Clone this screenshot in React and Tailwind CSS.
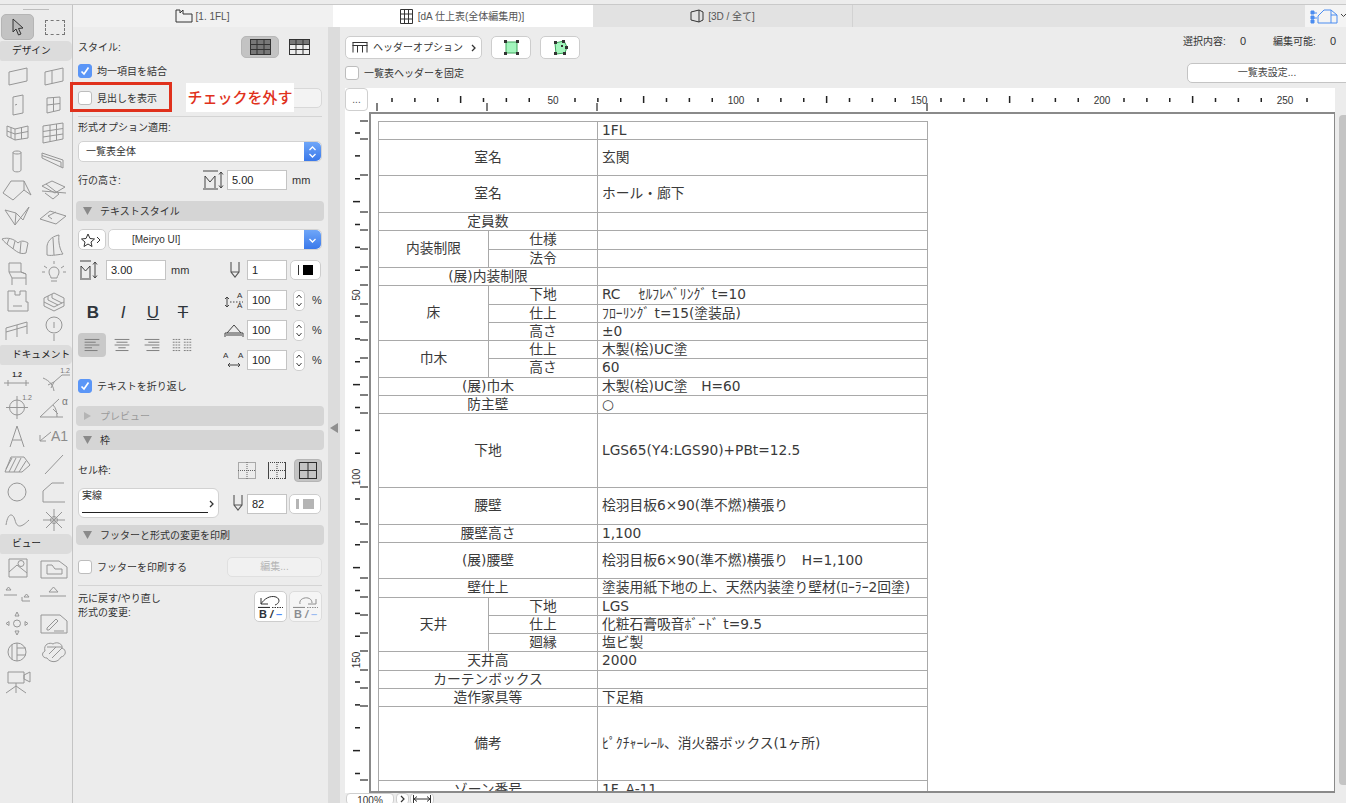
import React from "react";

// ===== TABLE DATA (h = row height, sub rows use span on the first one) =====
const rows = [
  { h: 18, label: "", value: "1FL" },
  { h: 36, label: "室名", value: "玄関" },
  { h: 37, label: "室名", value: "ホール・廊下" },
  { h: 18, label: "定員数", value: "" },
  { h: 19, group: "内装制限", span: 2, sub: "仕様", value: "" },
  { h: 18, sub: "法令", value: "" },
  { h: 18, label: "(展)内装制限", value: "" },
  { h: 19, group: "床", span: 3, sub: "下地", value: "RC　 ｾﾙﾌﾚﾍﾞﾘﾝｸﾞ t=10" },
  { h: 18, sub: "仕上", value: "ﾌﾛｰﾘﾝｸﾞ t=15(塗装品)" },
  { h: 18, sub: "高さ", value: "±0" },
  { h: 18, group: "巾木", span: 2, sub: "仕上", value: "木製(桧)UC塗" },
  { h: 19, sub: "高さ", value: "60" },
  { h: 18, label: "(展)巾木", value: "木製(桧)UC塗　H=60" },
  { h: 18, label: "防主壁", value: "○" },
  { h: 74, label: "下地", value: "LGS65(Y4:LGS90)+PBt=12.5" },
  { h: 37, label: "腰壁", value: "桧羽目板6×90(準不燃)横張り" },
  { h: 18, label: "腰壁高さ", value: "1,100" },
  { h: 36, label: "(展)腰壁", value: "桧羽目板6×90(準不燃)横張り　H=1,100" },
  { h: 19, label: "壁仕上", value: "塗装用紙下地の上、天然内装塗り壁材(ﾛｰﾗｰ2回塗)" },
  { h: 18, group: "天井", span: 3, sub: "下地", value: "LGS" },
  { h: 18, sub: "仕上", value: "化粧石膏吸音ﾎﾞｰﾄﾞ t=9.5" },
  { h: 18, sub: "廻縁", value: "塩ビ製" },
  { h: 19, label: "天井高", value: "2000" },
  { h: 18, label: "カーテンボックス", value: "" },
  { h: 18, label: "造作家具等", value: "下足箱" },
  { h: 74, label: "備考", value: "ﾋﾟｸﾁｬｰﾚｰﾙ、消火器ボックス(1ヶ所)" },
  { h: 18, label: "ゾーン番号", value: "1F_A-11" },
];

// ===== TOOL PALETTE ICONS (36x28 cell) =====
const I = (d, extra) => ({ d, extra });
const designTools = [
  I("M9 10L27 6V19L9 23Z"),
  I("M9 10L27 6V19L9 23ZM16 8.5V21.5"),
  I("M13 7L23 5V23L13 25ZM15 15l2-.7"),
  I("M11 8L24 7V20L11 23ZM17.5 7.5V21.5M11 15L24 13.5"),
  I("M7 8L15 11L28 8V20L15 22L7 18ZM15 11V22M7 13L15 16L28 13.5M11 9.5V20M21.5 9.5V21"),
  I("M7 8L27 5V21L7 25ZM7 13.5L27 10.5M7 19L27 16M14 7V23.5M20.5 6V22"),
  I("M13 6.5C13 4.5 21 4.5 21 6.5V24C21 26.5 13 26.5 13 24ZM13 6.5C13 8.5 21 8.5 21 6.5"),
  I("M6 7L27 14V22L6 12ZM6 9.5L25 16M25 16V21"),
  I("M3 19L11 7L24 7L31 21L24 16L13 26ZM24 7L24 16"),
  I("M6 12L16 7L29 13L19 19ZM6 17L30 19M10 10L23 20L17 25L9 19"),
  I("M5 8L15 23L29 5L23 18L16 11Z M15 23L16 11"),
  I("M4 17L14 9L30 14L20 22ZM12 14L20 10M12 14L16 17"),
  I("M2 9C8 7 14 9 18 13C21 10 25 11 28 13L26 23C20 25 16 21 12 18C8 15 4 12 2 9ZM9 9L7 14M15 11L13 19M21 12L20 23"),
  I("M11 25V16C12 9 18 6 23 5C22 12 24 20 27 24C20 25 14 26 11 25ZM17 8L18 25"),
  I("M9 5H21V14L26 16V20H12L9 14ZM9 14H21M12 20V27M26 20V27M21 14L26 16"),
  I("M13 14A5 5 0 1 1 23 14C23 17 21 18 21 20H15C15 18 13 17 13 14ZM15 23H21M18 3V6M8 8L11 10M28 8L25 10M6 14H9M27 14H30"),
  I("M8 5H15V9H20V5H26V16H28V25H8Z M13 20H22"),
  I("M8 12L18 7L28 12V16L18 21L8 16ZM12 10V14L22 19M16 8V12L26 17M8 16V20L18 25L28 20V16"),
  I("M6 14L27 8M6 18L27 12M6 26V14M17 23V11M27 20V8"),
  I("M18 20V27M18 3A7 7 0 1 0 18 19A7 7 0 1 0 18 3ZM18 8V14"),
];
const docTools = [
  I("M4 18H29M8 15V21M26 15V21", <text x="17" y="12" fontSize="7" fontWeight="700" textAnchor="middle" fill="#333" stroke="none">1.2</text>),
  I("M18 26C17 20 14 16 7 13M18 17L12 20M18 17L15 23M18 17L26 10H34", <text x="29" y="8" fontSize="7" textAnchor="middle" fill="#777" stroke="none">1.2</text>),
  I("M17 7A7.5 7.5 0 1 0 17 22A7.5 7.5 0 1 0 17 7ZM17 3V26M6 14.5H28", <text x="27" y="7" fontSize="7" textAnchor="middle" fill="#777" stroke="none">1.2</text>),
  I("M4 24H27M4 24L23 6M17 12C20 15 21 19 21 24M17 16L22 21", <text x="29" y="12" fontSize="10" textAnchor="middle" fill="#777" stroke="none">α</text>),
  I("M10 26L17 5L24 26M12.5 19H21.5"),
  I("M4 20L15 11M4 20V14M4 20H10", <text x="23.5" y="20" fontSize="14" textAnchor="middle" fill="#8b8b8b" stroke="none">A1</text>),
  I("M5 23L11 8H24L30 16L22 23ZM9 23L16 9M14 23L21 9M19 23L26 12M6 20L12 9"),
  I("M9 25L27 6"),
  I("M17 6A9 9 0 1 0 17 24A9 9 0 1 0 17 6Z"),
  I("M7 25V14L16 6H28M7 25H29"),
  I("M6 20C8 7 13 8 15 15C17 24 22 22 29 15"),
  I("M18 4V26M7 15H29M10 7L26 23M26 7L10 23M18 11.5A3.5 3.5 0 1 0 18 18.5A3.5 3.5 0 1 0 18 11.5Z"),
];
const viewTools = [
  I("M9 5H27V23H9ZM9 18L17 11L27 19M21 6.5A3 3 0 1 0 21 12.5A3 3 0 1 0 21 6.5Z"),
  I("M5 7H23L31 13V24H5ZM11 11H16L19 15H26V20H11Z"),
  I("M4 13H17M22 19H30M6 8H11L8.5 5ZM24 15H29L26.5 12ZM22 15V19"),
  I("M4 14H30M13 10H22L17.5 5Z"),
  I("M17 10A3.5 3.5 0 1 0 17 17A3.5 3.5 0 1 0 17 10ZM17 2L15 6H19ZM17 25L15 21H19ZM6 13.5L9 11.5V15.5ZM28 13.5L25 11.5V15.5Z"),
  I("M5 5H24L31 11V23H5ZM11 18L20 9L22 11L13 20H11ZM18 21H28"),
  I("M17 5A9 9 0 1 0 17 23A9 9 0 1 0 17 5ZM12 6.5V21.5M17 5V23M17 10H26M17 17H26"),
  I("M9 13C7 6 14 4 17 6C21 3 27 6 26 10C31 12 30 18 25 19C22 25 14 25 11 20C6 20 5 15 9 13ZM11 9H26M13 16L20 9M16 20L26 10"),
  I("M8 6H24V17H8ZM24 9L30 6V16L24 13ZM16 17V20M16 20L6 27M16 20V27M16 20L26 27"),
];

const ToolIcon = ({ tool }) => (
  <svg width="36" height="28" viewBox="0 0 36 28" fill="none" stroke="#969696" strokeWidth="1" strokeLinejoin="round">
    <path d={tool.d} />
    {tool.extra}
  </svg>
);

const ToolGrid = ({ tools }) => (
  <div className="grid grid-cols-2 w-[72px]">
    {tools.map((t, i) => (
      <ToolIcon key={i} tool={t} />
    ))}
  </div>
);

const PaletteHead = ({ children }) => (
  <div className="h-[20px] w-[72px] bg-[#dcdcdc] rounded-r-[5px] rounded-l-[2px] pl-[12px] text-[9.7px] leading-[20px] text-[#222] whitespace-nowrap">
    {children}
  </div>
);

// ===== SMALL PANEL PARTS =====
const Check = ({ on, children, className = "" }) => (
  <label className={`flex items-center gap-[5px] text-[10px] text-[#333] whitespace-nowrap ${className}`}>
    <span className={`w-[14px] h-[14px] rounded-[3px] flex items-center justify-center border ${on ? "bg-[#5b96f7] border-[#5b96f7]" : "bg-white border-[#bdbdbd]"}`}>
      {on && (
        <svg width="10" height="10" viewBox="0 0 10 10" fill="none" stroke="#fff" strokeWidth="1.7">
          <path d="M1.5 5.5L4 8L8.5 1.5" />
        </svg>
      )}
    </span>
    {children}
  </label>
);

const Section = ({ dim, children, className = "" }) => (
  <div className={`-ml-[2px] -mr-[2px] h-[20px] rounded-[4px] bg-[#d5d5d5] flex items-center pl-[7px] gap-[8px] text-[10px] ${dim ? "text-[#9a9a9a]" : "text-[#333]"} ${className}`}>
    <svg width="9" height="8" viewBox="0 0 9 8">
      {dim ? <path d="M1 0L8 4L1 8Z" fill="#b4b4b4" /> : <path d="M0 0H9L4.5 8Z" fill="#8a8a8a" />}
    </svg>
    {children}
  </div>
);

const Field = ({ w, children }) => (
  <div className={`h-[20px] ${w} bg-white border border-[#c4c4c4] pl-[4px] text-[11px] leading-[18px] text-[#222]`}>{children}</div>
);

const Stepper = () => (
  <div className="w-[12px] h-[21px] bg-white border border-[#cfcfcf] rounded-[5px] flex flex-col items-center justify-center">
    <svg width="8" height="15" viewBox="0 0 8 15" fill="none" stroke="#444" strokeWidth="1">
      <path d="M1.5 5L4 2L6.5 5M1.5 10L4 13L6.5 10" />
    </svg>
  </div>
);

const WhiteBtn = ({ className = "", children }) => (
  <div className={`bg-white border border-[#cdcdcd] rounded-[5px] flex items-center justify-center ${className}`}>{children}</div>
);

const BlueEnd = ({ double }) => (
  <div className="w-[17px] h-full rounded-r-[5px] bg-gradient-to-b from-[#6fa6f8] to-[#3a78ea] flex items-center justify-center">
    <svg width="9" height="14" viewBox="0 0 9 14" fill="none" stroke="#fff" strokeWidth="1.3">
      {double && <path d="M1.5 5L4.5 2L7.5 5" />}
      <path d={double ? "M1.5 9L4.5 12L7.5 9" : "M1.5 6L4.5 9L7.5 6"} />
    </svg>
  </div>
);

const PenIcon = () => (
  <svg width="12" height="20" viewBox="0 0 12 20" fill="none" stroke="#555" strokeWidth="1.1">
    <path d="M2 2V12L6 17L10 12V2M2 12H10" />
  </svg>
);

const GridIcon = ({ head, size = 21 }) => (
  <svg width={size} height="16" viewBox="0 0 21 16" fill="none" stroke="#333" strokeWidth="1">
    {head && <rect x="0.5" y="0.5" width="20" height="5" fill="#777" />}
    <rect x="0.5" y="0.5" width="20" height="15" fill={head ? "none" : "#777"} />
    <path d="M0 5.5H21M0 10.5H21M7 0V16M14 0V16" />
  </svg>
);

const RowIcon = ({ d, extra }) => (
  <svg width="22" height="20" viewBox="0 0 22 20" fill="none" stroke="#444" strokeWidth="1">
    <path d={d} />
    {extra}
  </svg>
);

const UndoBtn = ({ redo }) => (
  <WhiteBtn className={`w-[33px] h-[31px] ${redo ? "bg-[#f2f2f2] opacity-50" : ""}`}>
    <div className="flex flex-col items-center">
      <svg width="27" height="14" viewBox="0 0 27 14" fill="none" stroke="#333" strokeWidth="1">
        <path d={redo ? "M8 10C6 3 20 1 20 9M16 10H24V5" : "M4 10H11M4 10V4M4 10C7 5 13 1 19 3C24 5 22 10 18 11"} />
        <path d="M1 13.5H13" strokeWidth="1.2" />
        <path d="M15 13.5H26" strokeDasharray="1.5 1" />
      </svg>
      <div className="flex items-center gap-[3px] h-[12px] text-[11px] leading-[12px] font-bold text-[#2b3138]">
        <span>B</span>
        <span className="italic">/</span>
        <span className="text-[#4f8df5]">–</span>
      </div>
    </div>
  </WhiteBtn>
);

// ===== LEFT PANEL =====
const SidePanel = () => (
  <div className="w-[255px] pl-[5px] pr-[6px] flex flex-col relative">
    <div className="mt-[9px] h-[22px] flex items-center text-[10px] text-[#333]">
      スタイル:
      <div className="ml-auto w-[38px] h-[22px] bg-[#c3c3c3] border border-[#b7b7b7] rounded-[5px] flex items-center justify-center mr-[10px]">
        <GridIcon />
      </div>
      <div className="w-[22px] mr-[11px]">
        <GridIcon head />
      </div>
    </div>
    <Check on className="mt-[5px] h-[16px]">均一項目を結合</Check>
    <div className="mt-[9px] h-[20px] flex items-center">
      <Check>見出しを表示</Check>
      <div className="ml-auto w-[60px] h-[20px] bg-[#f3f3f3] border border-[#d8d8d8] rounded-[5px]" />
    </div>
    <div className="mt-[8px] h-px bg-[#d4d4d4]" />
    <div className="mt-[3px] h-[16px] text-[10px] leading-[16px] text-[#333]">形式オプション適用:</div>
    <div className="mt-[5px] h-[21px] bg-white rounded-[5px] border border-[#d2d2d2] flex items-center justify-between pl-[7px] text-[10px] text-[#333]">
      一覧表全体
      <BlueEnd double />
    </div>
    <div className="mt-[8px] h-[20px] flex items-center text-[10px] text-[#333]">
      行の高さ:
      <div className="ml-auto mr-[3px]">
        <RowIcon d="M1 1H16M1 19H16M3 18V6L8 12L13 6V18M19 2V18M17 4.5L19 2L21 4.5M17 15.5L19 18L21 15.5" />
      </div>
      <Field w="w-[60px]">5.00</Field>
      <span className="w-[35px] pl-[5px] text-[11px]">mm</span>
    </div>

    <Section className="mt-[11px]">テキストスタイル</Section>

    <div className="mt-[8px] h-[21px] flex items-center gap-[2px]">
      <WhiteBtn className="w-[28px] h-[21px] gap-[1px]">
        <svg width="22" height="14" viewBox="0 0 22 14" fill="none" stroke="#333" strokeWidth="1">
          <path d="M7 1L9 5.5L13.5 6L10 9L11 13.5L7 11L3 13.5L4 9L.5 6L5 5.5ZM16 4L19 7L16 10" />
        </svg>
      </WhiteBtn>
      <div className="flex-1 h-[21px] bg-white border border-[#d2d2d2] rounded-[5px] flex items-center justify-between pl-[23px] text-[10px] text-[#333]">
        [Meiryo UI]
        <BlueEnd />
      </div>
    </div>

    <div className="mt-[10px] h-[110px] flex">
      <div className="w-[145px]">
        <div className="h-[20px] flex items-center pl-[1px] gap-[5px] text-[11px] text-[#333]">
          <RowIcon d="M1 1H12M1 19H12M2 18V6L6.5 11L11 6V18M16 2V18M14 4.5L16 2L18 4.5M14 15.5L16 18L18 15.5" />
          <Field w="w-[60px]">3.00</Field>
          <span>mm</span>
        </div>
        <div className="mt-[22px] h-[22px] flex items-center text-[#2f353b]">
          <span className="w-[30px] text-center text-[17px] leading-[22px] font-bold">B</span>
          <span className="w-[30px] text-center text-[17px] leading-[22px] italic font-medium">I</span>
          <span className="w-[30px] text-center text-[17px] leading-[22px] underline">U</span>
          <span className="w-[30px] text-center text-[17px] leading-[22px] line-through">T</span>
        </div>
        <div className="mt-[9px] h-[24px] flex items-center">
          {["M6 7H22M6 10H18M6 13H22M6 16H14M6 19H20", "M6 7H22M8 10H20M6 13H22M10 16H18M7 19H21", "M6 7H22M10 10H22M6 13H22M14 16H22M8 19H22", "M4 7H13M4 10H13M4 13H13M4 16H13M4 19H13M16 7H24M16 10H24M16 13H24M16 16H24M16 19H24"].map((d, i) => (
            <div key={i} className={`w-[28px] h-[24px] rounded-[4px] mr-[2px] ${i === 0 ? "bg-[#c9c9c9]" : ""}`}>
              <svg width="28" height="24" viewBox="0 0 28 26" fill="none" stroke="#777" strokeWidth="1">
                <path d={d} strokeDasharray={i === 3 ? "2 1" : undefined} />
              </svg>
            </div>
          ))}
        </div>
      </div>
      <div className="flex-1 flex flex-col gap-[10px]">
        <div className="h-[20px] flex items-center gap-[3px]">
          <div className="w-[21px] flex justify-end pr-[3px]">
            <PenIcon />
          </div>
          <Field w="w-[40px]">1</Field>
          <WhiteBtn className="w-[31px] h-[20px] gap-[4px]">
            <span className="w-px h-[10px] bg-[#333]" />
            <span className="w-[10px] h-[10px] bg-black" />
          </WhiteBtn>
        </div>
        {[
          <>
            <path d="M4 7V17M2 9L4 7L6 9M2 15L4 17L6 15" />
            <text x="14" y="8" fontSize="8" fill="#333" stroke="none">A</text>
            <text x="14" y="18" fontSize="8" fill="#333" stroke="none">A</text>
            <path d="M7 12H20" strokeDasharray="1.5 1.5" />
          </>,
          <path d="M2 13H20M11 5L4 13M11 5L18 13M2 13V17M20 13V17M3 15H19" />,
          <>
            <text x="0" y="8" fontSize="8" fill="#333" stroke="none">A</text>
            <text x="15" y="8" fontSize="8" fill="#333" stroke="none">A</text>
            <path d="M5 15H17M7 13L5 15L7 17M15 13L17 15L15 17" />
          </>,
        ].map((svg, i) => (
          <div key={i} className="h-[20px] flex items-center gap-[2px]">
            <svg width="22" height="20" viewBox="0 0 22 20" fill="none" stroke="#444" strokeWidth="1">
              {svg}
            </svg>
            <Field w="w-[40px]">100</Field>
            <div className="ml-[4px]">
              <Stepper />
            </div>
            <span className="ml-[5px] text-[11px] text-[#333]">%</span>
          </div>
        ))}
      </div>
    </div>

    <Check on className="mt-[8px] h-[16px]">テキストを折り返し</Check>

    <Section dim className="mt-[12px]">プレビュー</Section>
    <Section className="mt-[4px]">枠</Section>

    <div className="mt-[9px] h-[23px] flex items-center text-[10px] text-[#333]">
      セル枠:
      <div className="ml-auto flex items-center">
        <svg width="18" height="17" viewBox="0 0 18 17" fill="none" stroke="#666" strokeDasharray="1 1">
          <rect x="0.5" y="0.5" width="17" height="16" />
          <path d="M9 0V17M0 8.5H18" />
        </svg>
        <svg className="ml-[12px]" width="18" height="17" viewBox="0 0 18 17" fill="none" stroke="#444">
          <path d="M0.5 0V17M17.5 0V17" />
          <path d="M0 .5H18M0 16.5H18M9 0V17M0 8.5H18" strokeDasharray="1 1" />
        </svg>
        <div className="ml-[8px] w-[28px] h-[23px] bg-[#c4c4c4] border border-[#b5b5b5] rounded-[4px] flex items-center justify-center">
          <svg width="18" height="17" viewBox="0 0 18 17" fill="none" stroke="#2d2d2d">
            <rect x="0.5" y="0.5" width="17" height="16" />
            <path d="M9 0V17M0 8.5H18" />
          </svg>
        </div>
      </div>
    </div>

    <div className="mt-[6px] h-[30px] flex items-center">
      <div className="w-[141px] h-[30px] bg-white border border-[#d2d2d2] rounded-[6px] flex flex-col justify-between relative pl-[3px] pb-[4px]">
        <span className="text-[10px] leading-[14px] text-[#333]">実線</span>
        <span className="w-[126px] h-px bg-[#222]" />
        <svg className="absolute right-[3px] top-[11px]" width="6" height="8" viewBox="0 0 6 8" fill="none" stroke="#333" strokeWidth="1.3">
          <path d="M1 1L4 4L1 7" />
        </svg>
      </div>
      <div className="ml-[10px] w-[18px] flex justify-center">
        <PenIcon />
      </div>
      <div className="mt-[2px]">
        <Field w="w-[40px]">82</Field>
      </div>
      <WhiteBtn className="ml-[2px] w-[32px] h-[20px] mt-[2px] gap-[4px]">
        <span className="w-[3px] h-[10px] bg-[#b5b5b5]" />
        <span className="w-[11px] h-[10px] bg-[#b5b5b5]" />
      </WhiteBtn>
    </div>

    <Section className="mt-[7px]">フッターと形式の変更を印刷</Section>

    <div className="mt-[12px] h-[20px] flex items-center">
      <Check>フッターを印刷する</Check>
      <div className="ml-auto w-[95px] h-[20px] bg-[#f1f1f1] border border-[#e0e0e0] rounded-[5px] text-center text-[10px] leading-[18px] text-[#b5b5b5]">編集...</div>
    </div>
    <div className="mt-[8px] h-px bg-[#d4d4d4]" />
    <div className="mt-[5px] h-[31px] flex">
      <div className="text-[10px] leading-[14px] text-[#333] pt-[1px]">
        元に戻す/やり直し
        <br />
        形式の変更:
      </div>
      <div className="ml-auto flex gap-[2px]">
        <UndoBtn />
        <UndoBtn redo />
      </div>
    </div>

    {/* red annotation over the panel */}
    <div className="absolute left-[-3px] top-[55px] w-[102px] h-[30px] border-[3px] border-[#e0311c]" />
    <div className="absolute left-[113px] top-[56px] w-[108px] h-[29px] bg-white text-[15px] leading-[29px] font-medium text-[#e0311c] text-center whitespace-nowrap">
      チェックを外す
    </div>
  </div>
);

// ===== RULERS =====
const TopRuler = () => {
  const ticks = [];
  for (let i = 0; i < 41; i++) {
    const x = 392 + i * 22.875;
    if (i % 8 === 7) continue; // label slot
    const big = i % 8 === 3;
    ticks.push(<rect key={i} x={x - 0.75} y={big ? 96 : 98} width="1.5" height={big ? 7 : 4} fill="#222" />);
  }
  return (
    <svg width="966" height="24" viewBox="369 88 966 24" className="block bg-white">
      {ticks}
      {[377, 487, 597, 927].map((x) => (
        <rect key={x} x={x - 0.75} y="103" width="1.5" height="8" fill="#555" />
      ))}
      {[50, 100, 150, 200, 250].map((n, i) => (
        <text key={n} x={553 + i * 183} y="104" fontSize="10" textAnchor="middle" fill="#333">
          {n}
        </text>
      ))}
    </svg>
  );
};

const LeftRuler = () => {
  const marks = [];
  let y = 121;
  rows.forEach((r) => {
    marks.push(y);
    y += r.h;
  });
  const ticks = [];
  for (let i = 0; i < 29; i++) {
    const ty = 133 + i * 22.875;
    if (i % 8 === 7) continue;
    const big = i % 8 === 3;
    ticks.push(<rect key={i} x={big ? 353 : 355} y={ty - 0.75} width={big ? 7 : 5} height="1.5" fill="#222" />);
  }
  return (
    <svg width="24" height="681" viewBox="345 112 24 681" className="block bg-white">
      {ticks}
      {marks.map((m) => (
        <rect key={m} x="360" y={m - 0.75} width="8" height="1.5" fill="#555" />
      ))}
      {[
        [50, 295],
        [100, 477],
        [150, 660],
      ].map(([n, ty]) => (
        <text key={n} x="360" y={ty} fontSize="10" textAnchor="middle" fill="#333" transform={`rotate(-90 360 ${ty})`}>
          {n}
        </text>
      ))}
    </svg>
  );
};

// ===== SCHEDULE TABLE =====
const cell = "border border-[#a9a9a9] p-0 pb-[1px] align-middle overflow-hidden whitespace-nowrap";

const Schedule = () => (
  <table className="table-fixed border-collapse w-[549px] text-[13.75px] leading-[15px] text-[#3a3a3a] font-['DejaVu_Sans','Noto_Sans_CJK_JP',sans-serif]">
    <colgroup>
      <col className="w-[110px]" />
      <col className="w-[109px]" />
      <col className="w-[330px]" />
    </colgroup>
    <tbody>
      {rows.map((r, i) => (
        <tr key={i} style={{ height: r.h }}>
          {r.label !== undefined && (
            <td colSpan={2} className={`${cell} text-center`}>
              {r.label}
            </td>
          )}
          {r.group && (
            <td rowSpan={r.span} className={`${cell} text-center`}>
              {r.group}
            </td>
          )}
          {r.sub && <td className={`${cell} text-center`}>{r.sub}</td>}
          <td className={`${cell} pl-[4px]`}>{r.value}</td>
        </tr>
      ))}
    </tbody>
  </table>
);

export default function App() {
  return (
    <div className="w-[1346px] h-[803px] overflow-hidden bg-[#ececec] flex flex-col font-['Liberation_Sans','Noto_Sans_CJK_JP',sans-serif]">
      <div className="h-[5px] shrink-0 border-b border-[#c9c9c9]" />
      <div className="flex flex-1 min-h-0">
        {/* ================= TOOL PALETTE ================= */}
        <aside className="w-[73px] shrink-0 border-r border-[#c4c4c4]">
          <div className="h-[8px] flex items-end justify-center pb-[3px]">
            <span className="w-[26px] h-px bg-[#bdbdbd]" />
          </div>
          <div className="h-[28px] flex items-center">
            <div className="w-[33px] h-[26px] ml-px bg-[#c3c3c3] border border-[#b5b5b5] rounded-[5px] flex items-center justify-center">
              <svg width="14" height="18" viewBox="0 0 14 18" fill="#b9b9b9" stroke="#333" strokeWidth="1">
                <path d="M2 1L2 14L5 11L7.5 17L10 16L7.5 10.5L12 10Z" />
              </svg>
            </div>
            <div className="w-[20px] h-[15px] ml-[11px] border border-dashed border-[#777]" />
          </div>
          <PaletteHead>デザイン</PaletteHead>
          <div className="h-px" />
          <ToolGrid tools={designTools} />
          <div className="mt-[3px]">
            <PaletteHead>ドキュメント</PaletteHead>
          </div>
          <ToolGrid tools={docTools} />
          <div className="mt-[1px]">
            <PaletteHead>ビュー</PaletteHead>
          </div>
          <ToolGrid tools={viewTools} />
        </aside>

        <div className="flex-1 flex flex-col min-w-0">
          {/* ================= TABS ================= */}
          <div className="h-[22px] shrink-0 flex bg-[#e2e2e2] text-[10px] text-[#555]">
            <div className="w-[260px] bg-[#f1f1f1] flex items-center justify-center gap-[3px] pr-[2px]">
              <svg width="18" height="14" viewBox="0 0 18 14" fill="none" stroke="#333">
                <path d="M1 1H5V4L8 1V5H17V13H1Z" />
              </svg>
              [1. 1FL]
            </div>
            <div className="w-[260px] bg-white flex items-center justify-center gap-[5px] pr-[2px]">
              <svg width="13" height="15" viewBox="0 0 13 15" fill="none" stroke="#333">
                <path d="M.5 .5H12.5V14.5H.5ZM4.5 0V15M8.5 0V15M0 5H13M0 10H13" />
              </svg>
              [dA 仕上表(全体編集用)]
            </div>
            <div className="w-[260px] border-r border-[#d2d2d2] flex items-center justify-center gap-[4px]">
              <svg width="14" height="14" viewBox="0 0 14 14" fill="none" stroke="#333">
                <path d="M1 3L9 1V13L1 11ZM9 1L13 3V11L9 13" />
              </svg>
              [3D / 全て]
            </div>
            <div className="ml-auto w-[41px] bg-[#f4f4f4] flex items-center pl-[5px]">
              <svg width="36" height="16" viewBox="0 0 36 16" fill="none" stroke="#4a8cf0" strokeWidth="1">
                <path d="M8 8L14 2H21L27 7V15H8ZM21 2V15M21 7H27" />
                <path d="M1 3H4V6H1ZM1 8H4V11H1ZM1 12H4V15H1ZM4 5H7M4 10H7" fill="#4a8cf0" />
                <path d="M31 6L33.5 8.5L36 6" stroke="#444" />
              </svg>
            </div>
          </div>

          <div className="flex-1 flex min-h-0">
            <SidePanel />

            {/* splitter */}
            <div className="w-[12px] shrink-0 bg-[#dcdcdc] pt-[396px] pl-[2px]">
              <svg width="8" height="10" viewBox="0 0 8 10">
                <path d="M8 0V10L0 5Z" fill="#8f8f8f" />
              </svg>
            </div>

            {/* ================= MAIN CONTENT ================= */}
            <main className="flex-1 min-w-0 pl-[5px] flex flex-col">
              <div className="mt-[9px] h-[23px] flex items-center gap-[9px] text-[10px] text-[#333]">
                <WhiteBtn className="w-[137px] h-[23px] !justify-start pl-[6px]">
                  <svg width="16" height="11" viewBox="0 0 16 11" fill="none" stroke="#333">
                    <path d="M.5 .5H15.5M.5 3.5H15.5M1 .5V10.5M15 .5V10.5M5.5 3.5V10.5M10.5 3.5V10.5" />
                  </svg>
                  <span className="ml-[5px]">ヘッダーオプション</span>
                  <svg className="ml-[8px]" width="6" height="8" viewBox="0 0 6 8" fill="none" stroke="#333" strokeWidth="1.3">
                    <path d="M1 1L4 4L1 7" />
                  </svg>
                </WhiteBtn>
                <WhiteBtn className="w-[40px] h-[23px]">
                  <svg width="15" height="15" viewBox="0 0 15 15">
                    <rect x="2" y="2" width="11" height="11" fill="#a3f5bd" stroke="#3ea75c" />
                    <path d="M0 0H3V3H0ZM12 0H15V3H12ZM0 12H3V15H0ZM12 12H15V15H12Z" fill="#333" />
                  </svg>
                </WhiteBtn>
                <WhiteBtn className="w-[40px] h-[23px]">
                  <svg width="17" height="17" viewBox="0 0 17 17">
                    <path d="M3 4L12 2L15 8L13 14L4 15Z" fill="#a3f5bd" stroke="#3ea75c" />
                    <path d="M2 2H5V5H2ZM10 1H13V4H10ZM13 7H16V10H13ZM11 13H14V16H11ZM2 13H5V16H2ZM9 6H11V8H9Z" fill="#333" />
                  </svg>
                </WhiteBtn>
                <div className="ml-auto mr-[6px] flex items-center -mt-[13px] text-[10px] text-[#333]">
                  <span className="w-[57px]">選択内容:</span>
                  <span className="w-[33px] text-[11px]">0</span>
                  <span className="w-[57px]">編集可能:</span>
                  <span className="w-[10px] text-[11px]">0</span>
                </div>
              </div>
              <div className="mt-[4px] h-[20px] flex items-center">
                <Check>一覧表ヘッダーを固定</Check>
                <div className="ml-auto w-[160px] -mr-px h-[20px] bg-white border border-[#c4c4c4] rounded-l-[5px] text-center text-[10px] leading-[18px] text-[#444]">一覧表設定...</div>
              </div>
              <div className="mt-[5px] h-[24px] flex">
                <div className="w-[24px] bg-white">
                  <div className="w-[23px] h-[23px] bg-white border border-[#cfcfcf] rounded-[4px] text-center text-[10px] leading-[22px] text-[#555]">...</div>
                </div>
                <TopRuler />
              </div>
              <div className="h-[681px] flex shrink-0">
                <LeftRuler />
                <div className="w-[966px] h-[681px] bg-white border-t-2 border-l-2 border-r border-b-2 border-[#8a8a8a] pl-[7px] pt-[7px] overflow-hidden">
                  <Schedule />
                </div>
                <div className="ml-[4px] mt-[3px] w-[7px] h-[670px] bg-[#c4c4c4] rounded-l-[4px]" />
              </div>
              <div className="h-[10px] flex items-start text-[10px] text-[#333] pl-px">
                <div className="w-[48px] h-[12px] bg-white border border-[#cfcfcf] rounded-[4px] text-center leading-[14px] overflow-hidden">100%</div>
                <div className="w-[13px] h-[12px] ml-[2px] bg-white border border-[#cfcfcf] rounded-[4px] flex items-center justify-center">
                  <svg width="6" height="8" viewBox="0 0 6 8" fill="none" stroke="#333" strokeWidth="1.2">
                    <path d="M1 1L4 4L1 7" />
                  </svg>
                </div>
                <div className="w-[24px] h-[12px] ml-[1px] bg-white border border-[#cfcfcf] rounded-[4px] flex items-start justify-center pt-[1px]">
                  <svg width="18" height="8" viewBox="0 0 18 8" fill="none" stroke="#333">
                    <path d="M.5 0V8M17.5 0V8M1 4H17M4 1.5L1 4L4 6.5M14 1.5L17 4L14 6.5" />
                  </svg>
                </div>
              </div>
            </main>
          </div>
        </div>
      </div>
    </div>
  );
}
